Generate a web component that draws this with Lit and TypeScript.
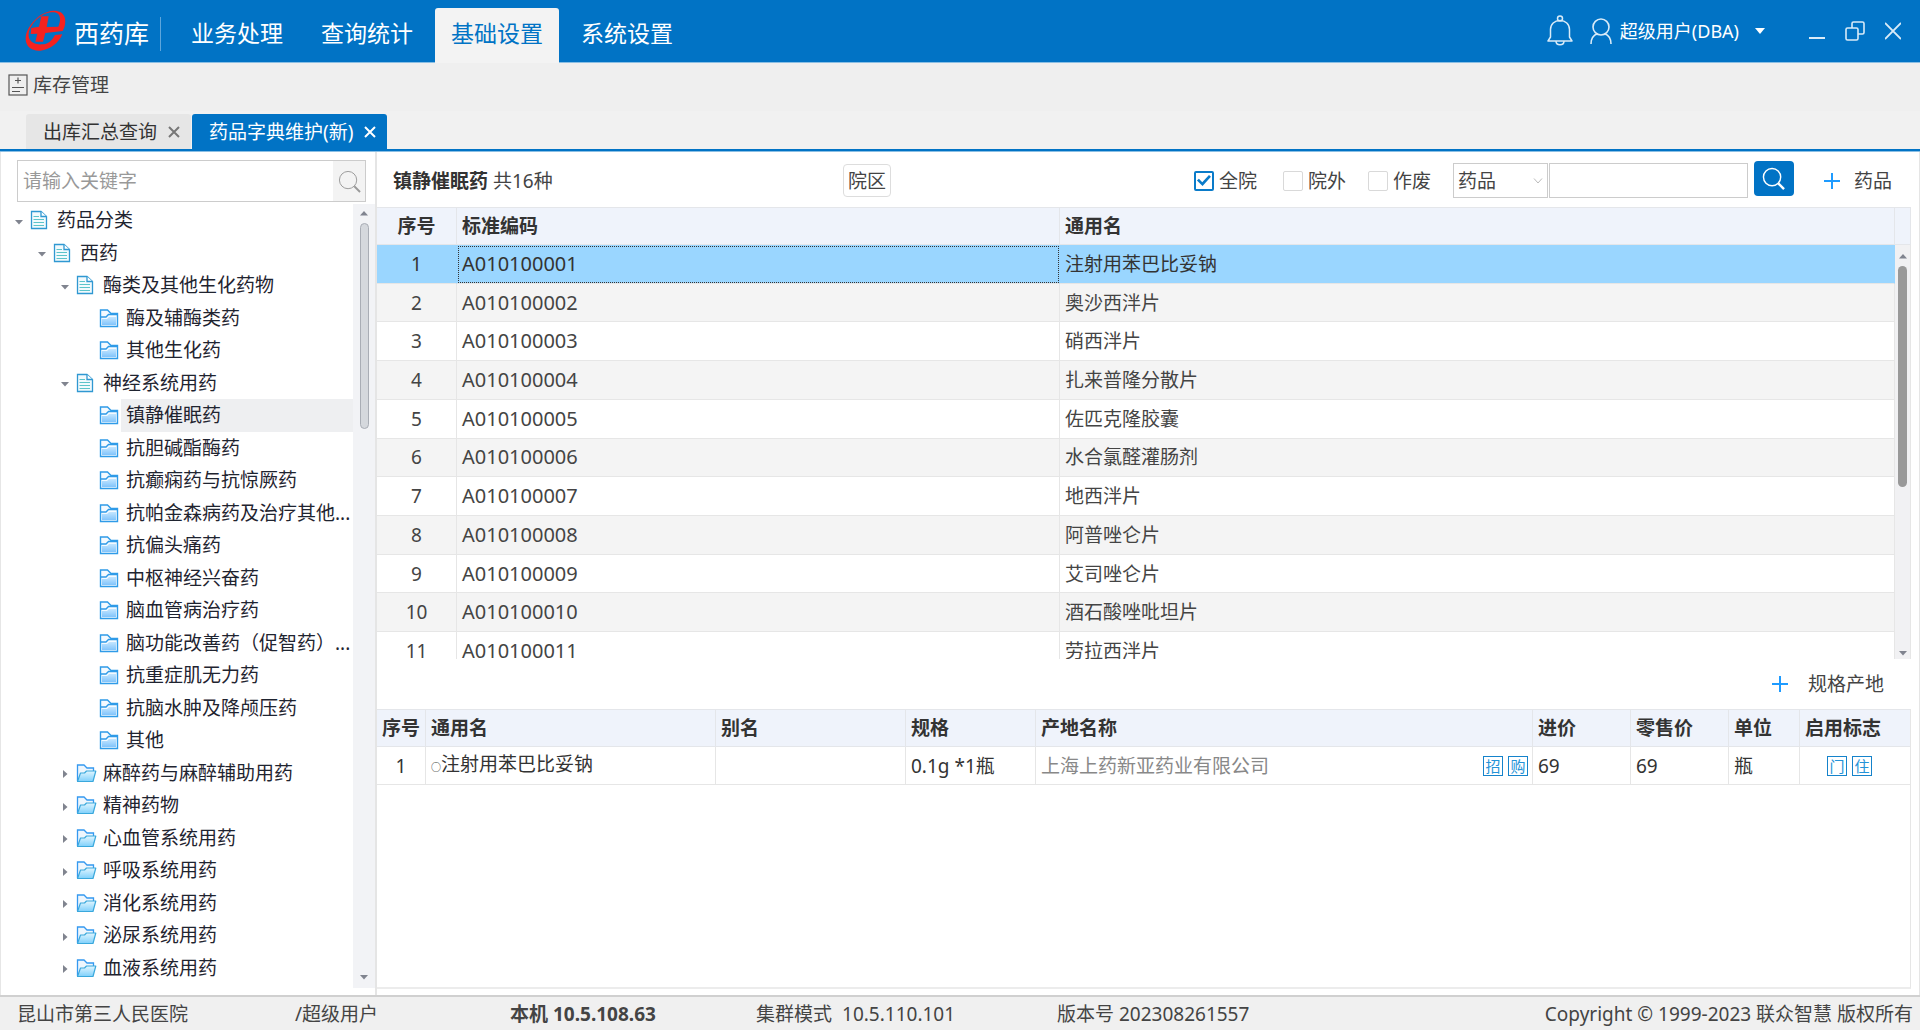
import { LitElement, html, css, svg, nothing } from "lit";
import { customElement, property, state } from "lit/decorators.js";
import { classMap } from "lit/directives/class-map.js";

const FONT = css`"Noto Sans", "Noto Sans CJK SC", sans-serif`;

const base = css`
  * {
    box-sizing: border-box;
  }
  button,
  input,
  select {
    font: inherit;
    color: inherit;
    margin: 0;
    padding: 0;
    border: 0;
    background: none;
  }
  button {
    cursor: pointer;
  }
  svg {
    display: block;
    flex: none;
  }
`;

type NodeKind = "doc" | "folder" | "open";
interface TreeNode {
  label: string;
  level: number;
  kind: NodeKind;
}

const TREE: TreeNode[] = [
  { label: "药品分类", level: 0, kind: "doc" },
  { label: "西药", level: 1, kind: "doc" },
  { label: "酶类及其他生化药物", level: 2, kind: "doc" },
  { label: "酶及辅酶类药", level: 3, kind: "folder" },
  { label: "其他生化药", level: 3, kind: "folder" },
  { label: "神经系统用药", level: 2, kind: "doc" },
  { label: "镇静催眠药", level: 3, kind: "folder" },
  { label: "抗胆碱酯酶药", level: 3, kind: "folder" },
  { label: "抗癫痫药与抗惊厥药", level: 3, kind: "folder" },
  { label: "抗帕金森病药及治疗其他...", level: 3, kind: "folder" },
  { label: "抗偏头痛药", level: 3, kind: "folder" },
  { label: "中枢神经兴奋药", level: 3, kind: "folder" },
  { label: "脑血管病治疗药", level: 3, kind: "folder" },
  { label: "脑功能改善药（促智药）...", level: 3, kind: "folder" },
  { label: "抗重症肌无力药", level: 3, kind: "folder" },
  { label: "抗脑水肿及降颅压药", level: 3, kind: "folder" },
  { label: "其他", level: 3, kind: "folder" },
  { label: "麻醉药与麻醉辅助用药", level: 2, kind: "open" },
  { label: "精神药物", level: 2, kind: "open" },
  { label: "心血管系统用药", level: 2, kind: "open" },
  { label: "呼吸系统用药", level: 2, kind: "open" },
  { label: "消化系统用药", level: 2, kind: "open" },
  { label: "泌尿系统用药", level: 2, kind: "open" },
  { label: "血液系统用药", level: 2, kind: "open" },
];

const DRUGS: [string, string][] = [
  ["A010100001", "注射用苯巴比妥钠"],
  ["A010100002", "奥沙西泮片"],
  ["A010100003", "硝西泮片"],
  ["A010100004", "扎来普隆分散片"],
  ["A010100005", "佐匹克隆胶囊"],
  ["A010100006", "水合氯醛灌肠剂"],
  ["A010100007", "地西泮片"],
  ["A010100008", "阿普唑仑片"],
  ["A010100009", "艾司唑仑片"],
  ["A010100010", "酒石酸唑吡坦片"],
  ["A010100011", "劳拉西泮片"],
];

const docIcon = html`<svg width="18" height="20" viewBox="0 0 18 20">
  <path d="M1.5 1.5H11L16.5 6.5V18.5H1.5Z" fill="#f2fafd" stroke="#2f98d2" stroke-width="1.3" />
  <path d="M11 1.5V6.5H16.5" fill="#fff" stroke="#2f98d2" stroke-width="1.3" />
  <path d="M3.5 6.5H9M3.5 9.5H14M3.5 12.5H14M3.5 15.5H14" stroke="#5cc4ca" />
</svg>`;

const folderIcon = html`<svg width="20" height="20" viewBox="0 0 20 20">
  <defs>
    <linearGradient id="f" x1="0" y1="0" x2="0" y2="1">
      <stop offset="0" stop-color="#c4e6ff" />
      <stop offset="1" stop-color="#82c4fb" />
    </linearGradient>
  </defs>
  <path d="M1.5 18.5V2H8.5L12 5.5H18.5V18.5Z" fill="#f4faff" stroke="#2f9be8" stroke-width="1.4" />
  <path d="M1.5 9H7L9.5 6.5H18" fill="none" stroke="#2f9be8" stroke-width="1.4" />
  <path d="M3 11H8L10 9H17V17H3Z" fill="url(#f)" />
</svg>`;

const openIcon = html`<svg width="21" height="20" viewBox="0 0 21 20">
  <defs>
    <linearGradient id="o" x1="0" y1="0" x2="0" y2="1">
      <stop offset="0" stop-color="#e2f6ff" />
      <stop offset="1" stop-color="#7fd0fb" />
    </linearGradient>
  </defs>
  <path d="M1.5 18V2H8L11 5H17.5V8" fill="#eef6fd" stroke="#3599f0" stroke-width="1.3" />
  <path
    d="M1.5 18.5L4.5 10H8.5L10.5 8H19.8L17 18.5Z"
    fill="url(#o)"
    stroke="#3aa8dc"
    stroke-width="1.2"
    stroke-linejoin="round"
  />
</svg>`;

const plusIcon = html`<svg width="16" height="16" viewBox="0 0 16 16">
  <path d="M8 0V16M0 8H16" stroke="#1e9bff" stroke-width="2" />
</svg>`;

const magnifier = (size: number, color: string, width: number) => html`<svg
  width=${size}
  height=${size}
  viewBox="0 0 24 24"
  fill="none"
  stroke=${color}
>
  <circle cx="10.5" cy="10.5" r="9" stroke-width=${width} />
  <path d="M17 17L23 23" stroke-width=${width + 1} />
</svg>`;

const closeIcon = html`<svg width="12" height="12" viewBox="0 0 12 12">
  <path d="M1 1L11 11M11 1L1 11" stroke="currentColor" stroke-width="2" />
</svg>`;

const arrow = (dir: "up" | "down" | "right") => {
  const d = { up: "M1 7.5L5 3L9 7.5Z", down: "M1 3L5 7.5L9 3Z", right: "M3 1L7.5 5L3 9Z" }[dir];
  return html`<svg width="10" height="10" viewBox="0 0 10 10">${svg`<path d=${d} fill="#80848f" />`}</svg>`;
};

@customElement("app-header")
export class AppHeader extends LitElement {
  @state() private active = "基础设置";

  static styles = [
    base,
    css`
      :host {
        display: block;
        background: #0173c5;
        border-bottom: 1px solid #8bbfe4;
        color: #fff;
      }
      .bar {
        display: flex;
        align-items: center;
        height: 62px;
        padding-right: 19px;
      }
      .logo {
        margin-left: 25px;
      }
      .title {
        margin: 4px 0 0 8px;
        font-size: 25px;
        font-weight: 400;
        line-height: 36px;
      }
      .rule {
        width: 1px;
        height: 34px;
        margin: 6px 14px 0 11px;
        background: #5ea6dc;
      }
      .menu {
        display: flex;
        align-self: flex-end;
        gap: 6px;
      }
      .item {
        display: flex;
        height: 55px;
        padding: 0 16px;
        margin-bottom: -1px;
        border-radius: 3px 3px 0 0;
        font-size: 23px;
        line-height: 50px;
      }
      .item.active {
        background: #f3f3f3;
        color: #0173c5;
      }
      .tools {
        display: flex;
        align-items: center;
        margin-left: auto;
      }
      .user {
        display: flex;
        align-items: center;
        gap: 8px;
        margin-left: 17px;
        font-size: 18px;
        line-height: 24px;
      }
      .caret {
        margin-left: 8px;
      }
      .windows {
        display: flex;
        gap: 20px;
        margin-left: 44px;
      }
    `,
  ];

  render() {
    const items = ["业务处理", "查询统计", "基础设置", "系统设置"];
    return html`<header class="bar">
      <svg class="logo" width="41" height="42" viewBox="74 35 123 126">
        <path
          fill="#f5221f"
          d="M187 98C194 86 197 70 193 57C188 42 175 36 158 37C121 41 86 74 77 110C71 140 90 159 120 157C150 154 175 134 186 108L164 110C155 128 141 138 127 138C104 140 88 132 85 114C82 84 119 45 153 42C170 40 179 48 179 62C179 70 177 78 174 85L139 86L145 54H123L116 85L93 89L91 107L111 106L105 130H128L135 104Z"
        />
      </svg>
      <h1 class="title">西药库</h1>
      <span class="rule"></span>
      <nav class="menu">
        ${items.map(
          (t) => html`<button
            class=${classMap({ item: true, active: t === this.active })}
            @click=${() => (this.active = t)}
          >
            ${t}
          </button>`,
        )}
      </nav>
      <div class="tools">
        <button aria-label="通知">
          <svg width="26" height="32" viewBox="0 0 26 32" fill="none" stroke="#d9ebf8" stroke-width="1.5">
            <circle cx="13" cy="3.5" r="2.5" />
            <path d="M1 26H25L22.5 22V14.5C22.5 9 18.5 5.5 13 5.5S3.5 9 3.5 14.5V22Z" stroke-linejoin="round" />
            <path d="M9 26C9 31 17 31 17 26" />
          </svg>
        </button>
        <button class="user">
          <svg width="22" height="27" viewBox="0 0 22 27" fill="none" stroke="#d9ebf8" stroke-width="1.6">
            <circle cx="11" cy="9" r="8" />
            <path d="M1 26C1 20 4 17 7.5 15.8M21 26C21 20 18 17 14.5 15.8" />
          </svg>
          超级用户(DBA)
          <svg class="caret" width="10" height="6" viewBox="0 0 10 6"><path d="M0 0H10L5 6Z" fill="#fff" /></svg>
        </button>
        <div class="windows">
          <button aria-label="最小化">
            <svg width="16" height="20" viewBox="0 0 16 20"><path d="M0 17H16" stroke="#d9ebf8" stroke-width="2" /></svg>
          </button>
          <button aria-label="还原">
            <svg width="20" height="20" viewBox="0 0 20 20" fill="none" stroke="#d9ebf8" stroke-width="1.6">
              <rect x="1" y="7" width="12" height="12" rx="1.5" />
              <path d="M7 7V2.5Q7 1 8.500 1H17.500Q19 1 19 2.500V11.500Q19 13 17.500 13H13" />
            </svg>
          </button>
          <button aria-label="关闭">
            <svg width="16" height="20" viewBox="0 0 16 20"><path d="M0 2L16 18M16 2L0 18" stroke="#d9ebf8" stroke-width="1.8" /></svg>
          </button>
        </div>
      </div>
    </header>`;
  }
}

@customElement("drug-tree")
export class DrugTree extends LitElement {
  @state() private selected = 6;

  static styles = [
    base,
    css`
      :host {
        display: flex;
        flex-direction: column;
        border-left: 1px solid #e6e6e6;
        padding: 8px 0 7px;
        font-size: 19px;
        color: #1f2430;
      }
      .search {
        display: flex;
        height: 42px;
        margin: 0 9px 2px 16px;
        border: 1px solid #ccc;
      }
      .search input {
        flex: 1;
        min-width: 0;
        padding: 0 5px;
        outline: 0;
      }
      .search input::placeholder {
        color: #999;
        opacity: 1;
      }
      .search button {
        display: grid;
        place-items: center;
        width: 32px;
        background: #f3f3f3;
      }
      .body {
        display: flex;
        flex: 1;
      }
      .rows {
        display: flex;
        flex: 1;
        flex-direction: column;
        min-width: 0;
        margin: 0;
        padding: 0 0 4px;
        list-style: none;
      }
      .rows li {
        display: flex;
        flex: 1 0 30px;
      }
      .node {
        display: flex;
        flex: 1;
        align-items: center;
        padding-left: 13px;
        text-align: left;
        line-height: 28px;
        white-space: nowrap;
      }
      .level-1 {
        padding-left: 36px;
      }
      .level-2 {
        padding-left: 59px;
      }
      .level-3 {
        padding-left: 82px;
      }
      .twist {
        width: 10px;
        padding-top: 3px;
      }
      .icon {
        width: 22px;
        margin: 0 0 0 6px;
      }
      .label {
        display: flex;
        flex: 1;
        align-items: center;
        align-self: stretch;
        padding-left: 5px;
      }
      .label.selected {
        background: #eeeff1;
      }
      .scroll {
        display: flex;
        flex-direction: column;
        align-items: center;
        width: 22px;
        padding: 4px 0 6px;
        background: #f2f3f6;
      }
      .thumb {
        width: 9px;
        height: 206px;
        margin: 5px 0 auto;
        border: 1px solid #a9adb5;
        border-radius: 5px;
        background: #d5d8dd;
      }
    `,
  ];

  private icon(kind: NodeKind) {
    return kind === "doc" ? docIcon : kind === "folder" ? folderIcon : openIcon;
  }

  render() {
    return html`
      <div class="search">
        <input type="text" placeholder="请输入关键字" aria-label="关键字" />
        <button aria-label="搜索">${magnifier(23, "#999", 1)}</button>
      </div>
      <div class="body">
        <ul class="rows">
          ${TREE.map(
            (n, i) => html`<li>
              <button class="node level-${n.level}" @click=${() => (this.selected = i)}>
                <span class="twist"
                  >${n.kind === "doc" ? arrow("down") : n.kind === "open" ? arrow("right") : nothing}</span
                >
                <span class="icon">${this.icon(n.kind)}</span>
                <span class=${classMap({ label: true, selected: i === this.selected })}>${n.label}</span>
              </button>
            </li>`,
          )}
        </ul>
        <div class="scroll">${arrow("up")}<span class="thumb"></span>${arrow("down")}</div>
      </div>
    `;
  }
}

const tableStyles = css`
  table {
    width: 100%;
    border-collapse: separate;
    border-spacing: 0;
    table-layout: fixed;
  }
  th {
    height: 38px;
    padding: 0 4px 0 5px;
    border: solid #e4e6ea;
    border-width: 1px 1px 1px 0;
    background: #eff3fb;
    color: #333;
    font-weight: 700;
    text-align: left;
    line-height: 28px;
    white-space: nowrap;
  }
  td {
    height: 38px;
    padding: 0 4px 0 5px;
    border: solid #e6e6e6;
    border-width: 0 1px 1px 0;
    line-height: 28px;
    white-space: nowrap;
  }
  th.num,
  td.num {
    padding: 0;
    text-align: center;
  }
`;

@customElement("drug-panel")
export class DrugPanel extends LitElement {
  @state() private row = 0;

  static styles = [
    base,
    tableStyles,
    css`
      :host {
        display: block;
        color: #444;
        font-size: 19px;
      }
      .toolbar {
        display: flex;
        align-items: center;
        height: 55px;
        padding: 2px 27px 0 16px;
      }
      .summary {
        width: 450px;
        line-height: 28px;
      }
      .summary b {
        color: #333;
      }
      .area {
        height: 33px;
        padding: 0 4px;
        border: 1px solid #ddd;
        border-radius: 4px;
        line-height: 28px;
      }
      .filters {
        display: flex;
        align-items: center;
        margin-left: auto;
      }
      .check {
        display: flex;
        align-items: center;
        gap: 5px;
        margin-right: 22px;
        line-height: 28px;
      }
      .check:first-child {
        margin-right: 26px;
      }
      .check input {
        appearance: none;
        display: grid;
        place-items: center;
        width: 20px;
        height: 20px;
        border: 1px solid #d9d9d9;
        border-radius: 2px;
        background: #fff;
      }
      .check input:checked {
        border: 2px solid #0a7bc9;
      }
      .check input:checked::before {
        content: "";
        width: 14px;
        height: 12px;
        background: #0a7bc9;
        clip-path: polygon(0 50%, 14% 36%, 38% 64%, 86% 4%, 100% 18%, 40% 96%);
      }
      .kind {
        position: relative;
        width: 95px;
      }
      .kind select {
        appearance: none;
        width: 100%;
        height: 35px;
        padding-left: 4px;
        border: 1px solid #ccc;
        border-radius: 0;
      }
      .kind svg {
        position: absolute;
        top: 14px;
        right: 5px;
        pointer-events: none;
      }
      .keyword {
        width: 199px;
        height: 35px;
        margin: 0 6px 0 1px;
        padding: 0 6px;
        border: 1px solid #ccc;
      }
      .go {
        display: grid;
        place-items: center;
        width: 40px;
        height: 35px;
        margin: -4px 30px 0 0;
        border-radius: 4px;
        background: #0173c5;
      }
      .add {
        display: flex;
        align-items: center;
        gap: 14px;
        line-height: 28px;
      }
      .list {
        display: flex;
        flex-direction: column;
        margin-right: 8px;
      }
      .view {
        display: flex;
        align-items: flex-start;
        height: 414px;
        overflow: hidden;
      }
      .view table {
        flex: 1;
        height: 426px;
      }
      .c-num {
        width: 80px;
      }
      .c-code {
        width: 603px;
      }
      .c-end {
        width: 16px;
      }
      .code {
        font-size: 20px;
      }
      .view tr:nth-child(even) td {
        background: #f4f4f4;
      }
      .view tr.selected td {
        border-right-color: #9ad6ff;
        background: #9ad6ff;
        color: #333;
      }
      .view tr.selected .code {
        outline: 1px dotted #333;
        outline-offset: -2px;
      }
      .scroll {
        display: flex;
        flex-direction: column;
        align-items: center;
        align-self: stretch;
        width: 16px;
        padding: 6px 0 1px;
        border-right: 1px solid #e6e6e6;
        background: #f1f1f3;
      }
      .thumb {
        width: 9px;
        height: 221px;
        margin: 5px 0 auto;
        border-radius: 5px;
        background: #999;
      }
    `,
  ];

  render() {
    return html`
      <div class="toolbar">
        <div class="summary"><b>镇静催眠药</b> 共16种</div>
        <button class="area">院区</button>
        <div class="filters">
          <label class="check"><input type="checkbox" checked />全院</label>
          <label class="check"><input type="checkbox" />院外</label>
          <label class="check"><input type="checkbox" />作废</label>
          <span class="kind">
            <select aria-label="类别">
              <option>药品</option>
            </select>
            <svg width="10" height="8" viewBox="0 0 10 8">
              <path d="M1 1.500L5 6L9 1.500" fill="none" stroke="#bbb" />
            </svg>
          </span>
          <input class="keyword" type="text" aria-label="药品名称" />
          <button class="go" aria-label="查询">${magnifier(23, "#fff", 1.5)}</button>
          <button class="add">${plusIcon}药品</button>
        </div>
      </div>
      <div class="list">
        <table>
          <colgroup>
            <col class="c-num" />
            <col class="c-code" />
            <col />
            <col class="c-end" />
          </colgroup>
          <thead>
            <tr>
              <th class="num">序号</th>
              <th>标准编码</th>
              <th>通用名</th>
              <th></th>
            </tr>
          </thead>
        </table>
        <div class="view">
          <table>
            <colgroup>
              <col class="c-num" />
              <col class="c-code" />
              <col />
            </colgroup>
            <tbody>
              ${DRUGS.map(
                ([code, name], i) => html`<tr
                  class=${classMap({ selected: i === this.row })}
                  @click=${() => (this.row = i)}
                >
                  <td class="num">${i + 1}</td>
                  <td class="code">${code}</td>
                  <td>${name}</td>
                </tr>`,
              )}
            </tbody>
          </table>
          <div class="scroll">${arrow("up")}<span class="thumb"></span>${arrow("down")}</div>
        </div>
      </div>
    `;
  }
}

@customElement("spec-panel")
export class SpecPanel extends LitElement {
  static styles = [
    base,
    tableStyles,
    css`
      :host {
        display: flex;
        flex: 1;
        flex-direction: column;
        color: #444;
        font-size: 19px;
      }
      .toolbar {
        display: flex;
        align-items: center;
        justify-content: flex-end;
        height: 50px;
        padding-right: 35px;
      }
      .add {
        display: flex;
        align-items: center;
        gap: 20px;
        line-height: 28px;
      }
      .sheet {
        flex: 1;
        margin: 0 8px 6px 0;
        border-right: 1px solid #e6e6e6;
        border-bottom: 2px solid #ececec;
      }
      td {
        color: #333;
      }
      td:last-child,
      th:last-child {
        border-right: 0;
      }
      .c-num {
        width: 49px;
      }
      .c-name {
        width: 290px;
      }
      .c-alias {
        width: 190px;
      }
      .c-spec {
        width: 130px;
      }
      .c-price {
        width: 98px;
      }
      .c-unit {
        width: 71px;
      }
      .c-flag {
        width: 110px;
      }
      .ring {
        font-size: 10px;
      }
      .origin {
        display: flex;
        align-items: center;
        justify-content: space-between;
        color: #888;
      }
      .tags {
        display: flex;
        gap: 5px;
      }
      .tags.flags {
        padding-left: 22px;
      }
      .tag {
        width: 20px;
        height: 20px;
        border: 1px solid #1583cb;
        color: #2493d8;
        font-size: 15px;
        line-height: 18px;
        text-align: center;
      }
    `,
  ];

  render() {
    return html`
      <div class="toolbar"><button class="add">${plusIcon}规格产地</button></div>
      <div class="sheet">
        <table>
          <colgroup>
            <col class="c-num" />
            <col class="c-name" />
            <col class="c-alias" />
            <col class="c-spec" />
            <col />
            <col class="c-price" />
            <col class="c-price" />
            <col class="c-unit" />
            <col class="c-flag" />
          </colgroup>
          <thead>
            <tr>
              <th class="num">序号</th>
              <th>通用名</th>
              <th>别名</th>
              <th>规格</th>
              <th>产地名称</th>
              <th>进价</th>
              <th>零售价</th>
              <th>单位</th>
              <th>启用标志</th>
            </tr>
          </thead>
          <tbody>
            <tr>
              <td class="num">1</td>
              <td><span class="ring">○</span>注射用苯巴比妥钠</td>
              <td></td>
              <td>0.1g *1瓶</td>
              <td>
                <div class="origin">
                  上海上药新亚药业有限公司
                  <span class="tags"><span class="tag">招</span><span class="tag">购</span></span>
                </div>
              </td>
              <td>69</td>
              <td>69</td>
              <td>瓶</td>
              <td>
                <div class="tags flags"><span class="tag">门</span><span class="tag">住</span></div>
              </td>
            </tr>
          </tbody>
        </table>
      </div>
    `;
  }
}

@customElement("app-root")
export class AppRoot extends LitElement {
  @property() host = "10.5.108.63";

  static styles = [
    base,
    css`
      :host {
        display: flex;
        flex-direction: column;
        min-height: 100vh;
        background: #fff;
        color: #444;
        font-family: ${FONT};
        font-size: 19px;
      }
      .ribbon {
        display: flex;
        align-items: center;
        height: 48px;
        padding: 0 8px 4px;
        background: #efefef;
      }
      .ribbon button {
        display: flex;
        align-items: center;
        gap: 5px;
        line-height: 28px;
      }
      .tabs {
        display: flex;
        gap: 1px;
        height: 38px;
        padding: 3px 26px 0;
        background: #f1f1f1;
      }
      .tab {
        display: flex;
        align-items: center;
        gap: 11px;
        padding: 0 11px 0 17px;
        border-radius: 3px 3px 0 0;
        background: #e6e6e6;
        color: #333;
        line-height: 28px;
      }
      .tab button {
        color: #777;
      }
      .tab.active {
        background: #0173c5;
        color: #fff;
      }
      .tab.active button {
        color: #fff;
      }
      .line {
        height: 3px;
        border-bottom: 1px solid #8bbfe4;
        background: #0173c5;
      }
      .work {
        display: flex;
        flex: 1;
      }
      drug-tree {
        width: 375px;
      }
      .main {
        display: flex;
        flex: 1;
        flex-direction: column;
        min-width: 0;
        border: solid #e5e5e5;
        border-width: 0 1px 0 2px;
      }
      .status {
        display: grid;
        grid-template-columns: 278fr 215fr 246fr 301fr 480fr 376fr;
        align-items: center;
        height: 35px;
        padding: 0 7px 0 17px;
        border-top: 2px solid #d0d0d0;
        background: #f0f0f0;
        line-height: 28px;
        white-space: nowrap;
      }
      .mode {
        display: flex;
        gap: 10px;
      }
      .copy {
        justify-self: end;
      }
    `,
  ];

  render() {
    return html`
      <app-header></app-header>
      <div class="ribbon">
        <button>
          <svg width="20" height="22" viewBox="0 0 20 22" fill="none" stroke="#555" stroke-width="1.2">
            <rect x="1" y="1" width="18" height="20" />
            <path d="M10 3.500V9.500M7 6.500H13M4 13.500H16M4 17.500H12" />
          </svg>
          库存管理
        </button>
      </div>
      <div class="tabs">
        <div class="tab">出库汇总查询<button aria-label="关闭">${closeIcon}</button></div>
        <div class="tab active">药品字典维护(新)<button aria-label="关闭">${closeIcon}</button></div>
      </div>
      <div class="line"></div>
      <div class="work">
        <drug-tree></drug-tree>
        <main class="main">
          <drug-panel></drug-panel>
          <spec-panel></spec-panel>
        </main>
      </div>
      <footer class="status">
        <span>昆山市第三人民医院</span>
        <span>/超级用户</span>
        <b>本机 ${this.host}</b>
        <span class="mode"><span>集群模式</span><span>10.5.110.101</span></span>
        <span>版本号 202308261557</span>
        <span class="copy">Copyright © 1999-2023 联众智慧 版权所有</span>
      </footer>
    `;
  }
}
